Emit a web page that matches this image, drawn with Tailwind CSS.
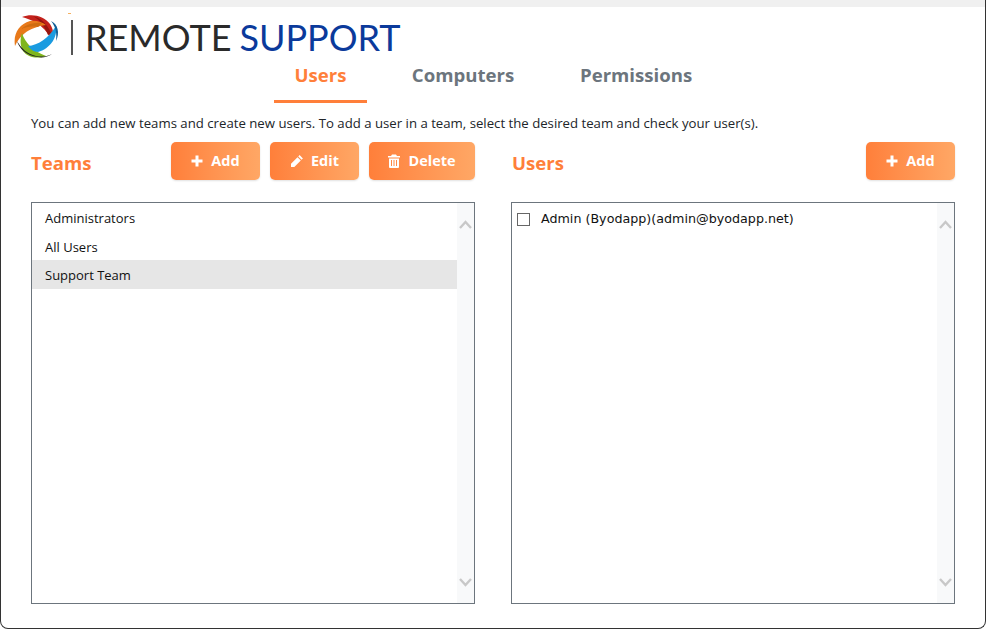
<!DOCTYPE html>
<html><head><meta charset="utf-8"><title>Remote Support</title>
<script src="https://cdn.jsdelivr.net/npm/@tailwindcss/browser@4"></script></head>
<body class="bg-white font-['Open_Sans','Noto_Sans',sans-serif]">
<div class="relative h-[629px] w-[986px] overflow-hidden rounded-b-[8px] border-x border-b border-[#333] bg-white">
  <div class="h-[7px] bg-[#f0f0f0]"></div>
  <div class="absolute left-[-1px] top-[13px] flex h-[46px] w-[420px] items-start bg-white">
    <svg class="absolute left-[14px] top-[1px]" width="46" height="46" viewBox="0 0 46 46" fill="none">
      <path d="M8 3C18 -1 30 2 36 10C40 16 40 22 38 28C35 20 30 14 24 10C18 6 12 4 8 3Z" fill="#c4221c"/>
      <path d="M19 2C26 4 33 9 37 19L34 21C31 13 26 6 19 2Z" fill="#96160f"/>
      <path d="M1 32C-1 20 5 10 16 7C22 6 28 8 32 11C24 12 16 15 11 19C7 22 3 27 1 32Z" fill="#e8791a"/>
      <path d="M7 15C13 10 21 8 28 9L24 13C17 12 12 13 7 15Z" fill="#cf6c10"/>
      <path d="M8 19C11 29 19 37 32 42C24 45 14 44 9 37C6 31 6 25 8 19Z" fill="#7fb51c"/>
      <path d="M3 27C5 34 12 42 24 43C28 44 34 43 38 40C32 43 27 43 22 42C13 40 7 34 3 27Z" fill="#222"/>
      <path d="M42 12C44 23 36 35 24 38C20 38 16 35 14 32C24 31 34 25 42 12Z" fill="#1a9be0"/>
      <path d="M37 7C44 10 46 19 42 27C43 20 42 13 37 7Z" fill="#0f5e96"/>
    </svg>
    <div class="ml-[71px] mt-[7px] h-[35px] w-[2px] bg-[#555]"></div>
    <div class="ml-[12px] mt-[4px] flex gap-[8px] font-['Lato',sans-serif] text-[36px] leading-[40px] font-normal whitespace-nowrap">
      <span class="text-[#2a2a2a]">REMOTE</span>
      <span class="text-[#0b3a9b]">SUPPORT</span>
    </div>
  </div>
  <div class="absolute left-[67px] top-[13px] h-px w-[3px] bg-[#f5b060]"></div>

  <nav class="ml-[273px] mt-[52px] flex gap-[23px] text-[18.6px] leading-[26px] font-bold text-[#6c757d]">
    <a class="h-[44px] w-[93px] border-b-[3px] border-[#ff7f3a] pt-[3px] text-center text-[#ff7f3a]">Users</a>
    <a class="h-[44px] w-[146px] pt-[3px] text-center">Computers</a>
    <a class="h-[44px] pt-[3px] pl-[21px]">Permissions</a>
  </nav>

  <p class="ml-[30px] mt-[11px] text-[13.2px] leading-[18px] text-[#212529]">You can add new teams and create new users. To add a user in a team, select the desired team and check your user(s).</p>

  <div class="ml-[30px] mt-[10px] grid w-[924px] grid-cols-[444px_444px] gap-x-[36px]">
    <section class="flex flex-col">
      <div class="flex h-[38px] items-center justify-between">
        <h2 class="mt-[3px] text-[18.6px] font-bold text-[#ff7f3a]">Teams</h2>
        <div class="flex gap-[10px]">
          <button class="flex h-[38px] w-[89px] items-center justify-center gap-[8px] rounded-[5px] bg-gradient-to-r from-[#ff7f3a] to-[#ffa765] text-[14.5px] font-bold text-white shadow-[0_1px_2px_rgba(0,0,0,0.12)]">
            <svg width="12" height="12" viewBox="0 0 12 12" fill="#fff"><path d="M4.500 0.500h3v4h4v3h-4v4h-3v-4h-4v-3h4z"/></svg>Add</button>
          <button class="flex h-[38px] w-[89px] items-center justify-center gap-[7px] rounded-[5px] bg-gradient-to-r from-[#ff7f3a] to-[#ffa765] text-[14.5px] font-bold text-white shadow-[0_1px_2px_rgba(0,0,0,0.12)]">
            <svg width="14" height="14" viewBox="0 0 14 14" fill="#fff"><path d="M9.600 1.100 12.900 4.400 11.600 5.700 8.300 2.400ZM7.500 3.200 10.800 6.500 4.300 13H1V9.700Z"/></svg>Edit</button>
          <button class="flex h-[38px] w-[106px] items-center justify-center gap-[8px] rounded-[5px] bg-gradient-to-r from-[#ff7f3a] to-[#ffa765] text-[14.5px] font-bold text-white shadow-[0_1px_2px_rgba(0,0,0,0.12)]">
            <svg width="12" height="14" viewBox="0 0 12 14" fill="#fff"><path d="M4 0.500h4L9 2h3v1.500H0V2h3ZM1 4.500h10V13a1 1 0 0 1-1 1H2a1 1 0 0 1-1-1ZM3 6v6h1V6ZM5.500 6v6h1V6ZM8 6v6h1V6Z" fill-rule="evenodd"/></svg>Delete</button>
        </div>
      </div>
      <div class="mt-[22px] flex h-[402px] border border-[#6c757d]">
        <ul class="flex-1 pt-[1px] text-[13px] text-[#111]">
          <li class="flex h-[28px] items-center pl-[13px] pt-[2px]">Administrators</li>
          <li class="flex h-[28px] items-center pl-[13px] pt-[4px]">All Users</li>
          <li class="flex h-[29px] items-center bg-[#e6e6e6] pl-[13px] pt-[2px]">Support Team</li>
        </ul>
        <div class="flex w-[17px] flex-col items-center justify-between bg-[#f8f9fa] pt-[17px] pb-[16px]">
          <svg width="13" height="9" viewBox="0 0 13 9" fill="none" stroke="#c8c8c8" stroke-width="2.4"><path d="M1 8 6.500 2 12 8"/></svg>
          <svg width="13" height="9" viewBox="0 0 13 9" fill="none" stroke="#c8c8c8" stroke-width="2.4"><path d="M1 1 6.500 7 12 1"/></svg>
        </div>
      </div>
    </section>
    <section class="flex flex-col">
      <div class="flex h-[38px] items-center justify-between">
        <h2 class="ml-px mt-[3px] text-[18.6px] font-bold text-[#ff7f3a]">Users</h2>
        <button class="flex h-[38px] w-[89px] items-center justify-center gap-[8px] rounded-[5px] bg-gradient-to-r from-[#ff7f3a] to-[#ffa765] text-[14.5px] font-bold text-white shadow-[0_1px_2px_rgba(0,0,0,0.12)]">
          <svg width="12" height="12" viewBox="0 0 12 12" fill="#fff"><path d="M4.500 0.500h3v4h4v3h-4v4h-3v-4h-4v-3h4z"/></svg>Add</button>
      </div>
      <div class="mt-[22px] flex h-[402px] border border-[#6c757d]">
        <div class="flex-1 pl-[5px] pt-[6px]">
          <label class="flex h-[20px] items-center gap-[11px] font-['DejaVu_Sans',sans-serif] text-[12.7px] text-[#111]">
            <span class="h-[13px] w-[13px] border border-[#666] bg-white"></span>Admin (Byodapp)(admin@byodapp.net)</label>
        </div>
        <div class="flex w-[17px] flex-col items-center justify-between bg-[#f8f9fa] pt-[17px] pb-[16px]">
          <svg width="13" height="9" viewBox="0 0 13 9" fill="none" stroke="#c8c8c8" stroke-width="2.4"><path d="M1 8 6.500 2 12 8"/></svg>
          <svg width="13" height="9" viewBox="0 0 13 9" fill="none" stroke="#c8c8c8" stroke-width="2.4"><path d="M1 1 6.500 7 12 1"/></svg>
        </div>
      </div>
    </section>
  </div>
</div>
</body></html>
